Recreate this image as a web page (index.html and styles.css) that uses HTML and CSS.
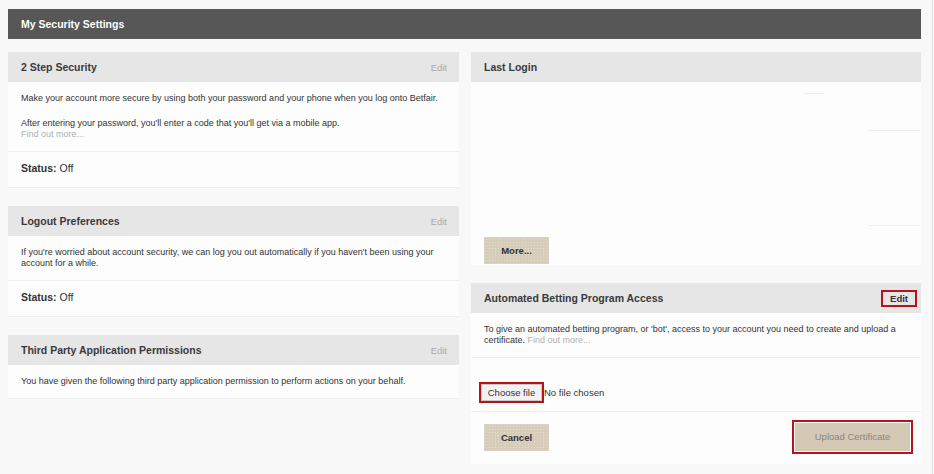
FILE: index.html
```html
<!DOCTYPE html>
<html lang="en">
<head>
<meta charset="utf-8">
<title>My Security Settings</title>
<link rel="stylesheet" href="styles.css">
</head>
<body>
<div class="page">
  <div class="topbar">My Security Settings</div>
  <div class="cols">
    <div class="col">
      <section class="card">
        <div class="card-head"><h2>2 Step Security</h2><span class="edit">Edit</span></div>
        <div class="row desc">
          <p>Make your account more secure by using both your password and your phone when you log onto Betfair.</p>
          <p>After entering your password, you'll enter a code that you'll get via a mobile app.<br><span class="more">Find out more...</span></p>
        </div>
        <div class="row status"><b>Status:</b> Off</div>
      </section>
      <section class="card">
        <div class="card-head"><h2>Logout Preferences</h2><span class="edit">Edit</span></div>
        <div class="row desc">
          <p>If you're worried about account security, we can log you out automatically if you haven't been using your account for a while.</p>
        </div>
        <div class="row status"><b>Status:</b> Off</div>
      </section>
      <section class="card">
        <div class="card-head"><h2>Third Party Application Permissions</h2><span class="edit">Edit</span></div>
        <div class="row desc">
          <p>You have given the following third party application permission to perform actions on your behalf.</p>
        </div>
      </section>
    </div>
    <div class="col col-right">
      <section class="card login-card">
        <div class="card-head"><h2>Last Login</h2></div>
        <div class="login-body">
          <span class="faint faint-a"></span>
          <span class="faint faint-b"></span>
          <span class="faint faint-c"></span>
        </div>
        <div class="btn-wrap"><button class="tan-btn">More...</button></div>
      </section>
      <section class="card">
        <div class="card-head"><h2>Automated Betting Program Access</h2><span class="hl"><span class="edit-strong">Edit</span></span></div>
        <div class="row desc">
          <p>To give an automated betting program, or 'bot', access to your account you need to create and upload a<br>certificate. <span class="more">Find out more...</span></p>
        </div>
        <div class="row file-row">
          <span class="hl hl-file"><span class="file-btn">Choose file</span></span><span class="file-name">No file chosen</span>
        </div>
        <div class="actions">
          <button class="tan-btn">Cancel</button>
          <span class="hl hl-upload"><span class="upload-btn">Upload Certificate</span></span>
        </div>
      </section>
    </div>
  </div>
</div>
</body>
</html>
```

FILE: styles.css
```css
html, body {
  margin: 0;
  padding: 0;
  background: #f8f8f8;
}
body {
  font-family: "Liberation Sans", Arial, sans-serif;
  color: #333;
}
.page {
  box-sizing: border-box;
  width: 933px;
  min-height: 474px;
  padding: 9px 11px 0 8px;
  border-right: 1px solid #e2e2e2;
}
.topbar {
  height: 30px;
  background: #575757;
  color: #fff;
  font-weight: bold;
  font-size: 10.5px;
  line-height: 30px;
  padding-left: 13px;
}
.cols {
  display: grid;
  grid-template-columns: 451px 450px;
  column-gap: 12px;
  margin-top: 13px;
  align-items: start;
}
.col {
  display: flex;
  flex-direction: column;
  gap: 18px;
}
.card {
  background: #fdfdfd;
}
.card-head {
  height: 30px;
  background: #e6e6e7;
  display: flex;
  align-items: center;
  justify-content: space-between;
  padding: 0 12px 0 13px;
}
.card-head h2 {
  margin: 0;
  font-size: 10.5px;
  font-weight: bold;
  color: #3a3a3a;
}
.edit {
  color: #ababab;
  font-size: 9.5px;
}
.row {
  border-bottom: 1px solid #eeeeee;
}
.desc {
  padding: 11px 13px;
  font-size: 9px;
  line-height: 11px;
  color: #333;
}
.desc p {
  margin: 0;
}
.desc p + p {
  margin-top: 14px;
}
.more {
  color: #b0b0b0;
}
.status {
  padding: 9px 13px 11px;
  font-size: 10.5px;
  line-height: 15px;
  color: #333;
}
.login-card {
  padding-bottom: 1px;
}
.login-body {
  height: 155px;
  display: flex;
  flex-direction: column;
  align-items: flex-start;
}
.faint {
  display: block;
  height: 1px;
  background: #efefef;
}
.faint-a {
  margin: 11px 0 0 333px;
  width: 20px;
}
.faint-b {
  margin: 36px 0 0 397px;
  width: 52px;
}
.faint-c {
  margin: 94px 0 0 397px;
  width: 52px;
}
.btn-wrap {
  padding-left: 13px;
}
.tan-btn {
  width: 65px;
  height: 27px;
  border: 1px solid #d8d2c4;
  background-color: #d6ccb8;
  background-image: radial-gradient(circle, rgba(255,255,255,0.35) 0.6px, transparent 0.9px);
  background-size: 3px 3px;
  font-family: "Liberation Sans", Arial, sans-serif;
  font-weight: bold;
  font-size: 9.5px;
  color: #333;
  padding: 0;
}
.hl {
  display: inline-flex;
  border: 2px solid #b3141d;
  padding: 1px;
}
.edit-strong {
  font-weight: bold;
  font-size: 9.5px;
  color: #333;
  padding: 0 6px;
  line-height: 11px;
}
.card-head .hl {
  margin-right: -8px;
}
.file-row {
  padding: 24px 8px 8px;
  display: flex;
  align-items: center;
}
.hl-file {
  padding: 0;
}
.file-btn {
  display: block;
  box-sizing: border-box;
  width: 61px;
  height: 17px;
  border: 1px solid #c9c9c9;
  background: #f2f2f2;
  font-size: 9.5px;
  line-height: 15px;
  text-align: center;
  color: #333;
}
.file-name {
  font-size: 9.5px;
  color: #333;
}
.actions {
  display: flex;
  justify-content: space-between;
  align-items: center;
  padding: 8px 8px 10px 13px;
}
.hl-upload {
  padding: 1px;
}
.upload-btn {
  display: block;
  width: 115px;
  height: 28px;
  background: #d4c9b4;
  color: #8b8484;
  font-size: 9.5px;
  line-height: 28px;
  text-align: center;
}
```
